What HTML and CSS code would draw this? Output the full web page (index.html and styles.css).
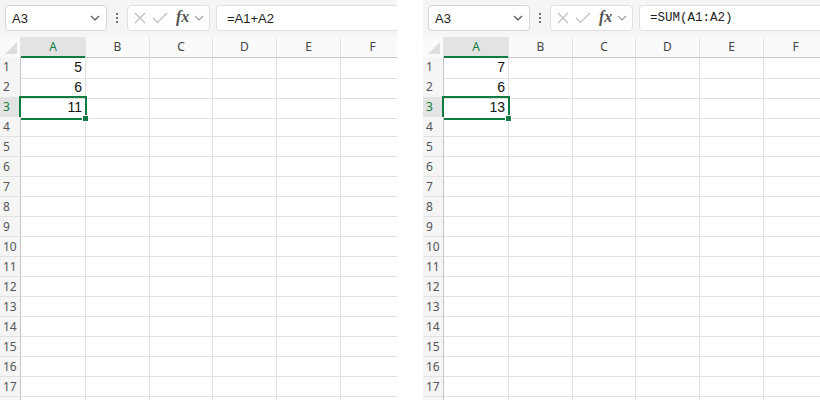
FILE: index.html
```html
<!DOCTYPE html>
<html>
<head>
<meta charset="utf-8">
<link rel="stylesheet" href="styles.css">
</head>
<body>
<div class="panel">
  <div class="toolbar">
    <div class="namebox"><span>A3</span><svg class="chev" width="10" height="6" viewBox="0 0 10 6"><path d="M1 1 L5 5 L9 1" fill="none" stroke="#555" stroke-width="1.2"/></svg></div>
    <div class="vdots"><i></i><i></i><i></i></div>
    <div class="fxbox">
      <svg width="14" height="14" viewBox="0 0 14 14"><path d="M2 2 L12 12 M12 2 L2 12" stroke="#bdbdbd" stroke-width="1.2"/></svg>
      <svg width="16" height="14" viewBox="0 0 16 14"><path d="M1 7 L5.5 11.5 L15 2" fill="none" stroke="#bdbdbd" stroke-width="1.2"/></svg>
      <span class="fx">fx</span>
      <svg width="10" height="6" viewBox="0 0 10 6"><path d="M1 1 L5 5 L9 1" fill="none" stroke="#999" stroke-width="1.1"/></svg>
    </div>
    <div class="formula">=A1+A2</div>
  </div>
  <div class="grid">
    <div class="row head"><span class="corner"><em></em></span><span class="sel">A</span><span>B</span><span>C</span><span>D</span><span>E</span><span>F</span></div>
    <div class="row"><span class="rh">1</span><span class="num">5</span><span></span><span></span><span></span><span></span><span></span></div>
    <div class="row"><span class="rh">2</span><span class="num">6</span><span></span><span></span><span></span><span></span><span></span></div>
    <div class="row"><span class="rh sel">3</span><span class="num active">11</span><span></span><span></span><span></span><span></span><span></span></div>
    <div class="row"><span class="rh">4</span><span></span><span></span><span></span><span></span><span></span><span></span></div>
    <div class="row"><span class="rh">5</span><span></span><span></span><span></span><span></span><span></span><span></span></div>
    <div class="row"><span class="rh">6</span><span></span><span></span><span></span><span></span><span></span><span></span></div>
    <div class="row"><span class="rh">7</span><span></span><span></span><span></span><span></span><span></span><span></span></div>
    <div class="row"><span class="rh">8</span><span></span><span></span><span></span><span></span><span></span><span></span></div>
    <div class="row"><span class="rh">9</span><span></span><span></span><span></span><span></span><span></span><span></span></div>
    <div class="row"><span class="rh">10</span><span></span><span></span><span></span><span></span><span></span><span></span></div>
    <div class="row"><span class="rh">11</span><span></span><span></span><span></span><span></span><span></span><span></span></div>
    <div class="row"><span class="rh">12</span><span></span><span></span><span></span><span></span><span></span><span></span></div>
    <div class="row"><span class="rh">13</span><span></span><span></span><span></span><span></span><span></span><span></span></div>
    <div class="row"><span class="rh">14</span><span></span><span></span><span></span><span></span><span></span><span></span></div>
    <div class="row"><span class="rh">15</span><span></span><span></span><span></span><span></span><span></span><span></span></div>
    <div class="row"><span class="rh">16</span><span></span><span></span><span></span><span></span><span></span><span></span></div>
    <div class="row"><span class="rh">17</span><span></span><span></span><span></span><span></span><span></span><span></span></div>
    <div class="row"><span class="rh"></span><span></span><span></span><span></span><span></span><span></span><span></span></div>
  </div>
</div>
<div class="panel">
  <div class="toolbar">
    <div class="namebox"><span>A3</span><svg class="chev" width="10" height="6" viewBox="0 0 10 6"><path d="M1 1 L5 5 L9 1" fill="none" stroke="#555" stroke-width="1.2"/></svg></div>
    <div class="vdots"><i></i><i></i><i></i></div>
    <div class="fxbox">
      <svg width="14" height="14" viewBox="0 0 14 14"><path d="M2 2 L12 12 M12 2 L2 12" stroke="#bdbdbd" stroke-width="1.2"/></svg>
      <svg width="16" height="14" viewBox="0 0 16 14"><path d="M1 7 L5.5 11.5 L15 2" fill="none" stroke="#bdbdbd" stroke-width="1.2"/></svg>
      <span class="fx">fx</span>
      <svg width="10" height="6" viewBox="0 0 10 6"><path d="M1 1 L5 5 L9 1" fill="none" stroke="#999" stroke-width="1.1"/></svg>
    </div>
    <div class="formula mono">=SUM(A1:A2)</div>
  </div>
  <div class="grid">
    <div class="row head"><span class="corner"><em></em></span><span class="sel">A</span><span>B</span><span>C</span><span>D</span><span>E</span><span>F</span></div>
    <div class="row"><span class="rh">1</span><span class="num">7</span><span></span><span></span><span></span><span></span><span></span></div>
    <div class="row"><span class="rh">2</span><span class="num">6</span><span></span><span></span><span></span><span></span><span></span></div>
    <div class="row"><span class="rh sel">3</span><span class="num active">13</span><span></span><span></span><span></span><span></span><span></span></div>
    <div class="row"><span class="rh">4</span><span></span><span></span><span></span><span></span><span></span><span></span></div>
    <div class="row"><span class="rh">5</span><span></span><span></span><span></span><span></span><span></span><span></span></div>
    <div class="row"><span class="rh">6</span><span></span><span></span><span></span><span></span><span></span><span></span></div>
    <div class="row"><span class="rh">7</span><span></span><span></span><span></span><span></span><span></span><span></span></div>
    <div class="row"><span class="rh">8</span><span></span><span></span><span></span><span></span><span></span><span></span></div>
    <div class="row"><span class="rh">9</span><span></span><span></span><span></span><span></span><span></span><span></span></div>
    <div class="row"><span class="rh">10</span><span></span><span></span><span></span><span></span><span></span><span></span></div>
    <div class="row"><span class="rh">11</span><span></span><span></span><span></span><span></span><span></span><span></span></div>
    <div class="row"><span class="rh">12</span><span></span><span></span><span></span><span></span><span></span><span></span></div>
    <div class="row"><span class="rh">13</span><span></span><span></span><span></span><span></span><span></span><span></span></div>
    <div class="row"><span class="rh">14</span><span></span><span></span><span></span><span></span><span></span><span></span></div>
    <div class="row"><span class="rh">15</span><span></span><span></span><span></span><span></span><span></span><span></span></div>
    <div class="row"><span class="rh">16</span><span></span><span></span><span></span><span></span><span></span><span></span></div>
    <div class="row"><span class="rh">17</span><span></span><span></span><span></span><span></span><span></span><span></span></div>
    <div class="row"><span class="rh"></span><span></span><span></span><span></span><span></span><span></span><span></span></div>
  </div>
</div>
</body>
</html>
```
FILE: styles.css
```css
html, body { margin: 0; padding: 0; background: #fff; }
body {
  display: flex;
  gap: 26px;
  width: 820px;
  height: 400px;
  overflow: hidden;
  font-family: "Liberation Sans", Arial, sans-serif;
}
.panel {
  width: 397px;
  height: 400px;
  overflow: hidden;
  flex: none;
}
.toolbar {
  height: 37px;
  box-sizing: border-box;
  background: #f5f5f5;
  padding: 5px 0 6px 5px;
  display: flex;
  align-items: stretch;
}
.namebox {
  width: 102px;
  box-sizing: border-box;
  background: #fff;
  border: 1px solid #d6d6d6;
  border-radius: 4px;
  display: flex;
  align-items: center;
  justify-content: space-between;
  padding: 0 6px 0 6px;
  font-size: 13px;
  color: #222;
}
.vdots {
  width: 20px;
  display: flex;
  flex-direction: column;
  align-items: center;
  justify-content: center;
  gap: 2px;
}
.vdots i {
  width: 2px;
  height: 2px;
  border-radius: 1px;
  background: #444;
}
.fxbox {
  width: 83px;
  box-sizing: border-box;
  background: #fff;
  border: 1px solid #e0e0e0;
  border-radius: 4px;
  display: flex;
  align-items: center;
  padding: 0 3px 0 5px;
  gap: 5px;
}
.fx {
  font-family: "Liberation Serif", "Times New Roman", serif;
  font-style: italic;
  font-weight: bold;
  font-size: 16px;
  color: #555;
  margin-left: 3px;
  margin-top: -2px;
}
.formula {
  margin-left: 6px;
  flex: 1;
  background: #fff;
  border: 1px solid #e0e0e0;
  border-right: none;
  border-radius: 4px 0 0 4px;
  display: flex;
  align-items: center;
  padding-left: 10px;
  font-size: 13px;
  color: #222;
}
.formula.mono {
  font-family: "Liberation Mono", "Courier New", monospace;
  font-size: 12.5px;
}
.grid { display: flex; flex-direction: column; }
.row {
  display: grid;
  grid-template-columns: 21px 65px 64px 63px 64px 64px 64px;
  height: 20px;
}
.row > span {
  box-sizing: border-box;
  border-right: 1px solid #e1e1e1;
  border-bottom: 1px solid #e1e1e1;
  position: relative;
}
.head > span {
  background: #fafafa;
  border-bottom: 1px solid #c6c6c6;
  border-right: 1px solid #e4e4e4;
  font-family: "Noto Sans", "Open Sans", sans-serif;
  font-size: 12px;
  color: #444;
  text-align: center;
  line-height: 19px;
}
.head > span.sel {
  background: #e3e3e3;
  color: #107c41;
  border-bottom: 2px solid #107c41;
}
.corner em {
  position: absolute;
  right: 3px;
  bottom: 3px;
  width: 12px;
  height: 12px;
  background: #dddddd;
  clip-path: polygon(100% 0, 100% 100%, 0 100%);
}
.rh {
  background: #f5f5f5;
  border-right: 1px solid #c6c6c6 !important;
  font-family: "Noto Sans", "Open Sans", sans-serif;
  font-size: 12px;
  color: #555;
  padding-left: 3px;
  line-height: 19px;
}
.rh.sel {
  background: #e3e3e3;
  color: #107c41;
}
.num {
  text-align: right;
  padding-right: 3px;
  font-size: 14px;
  color: #111;
  line-height: 21px;
}
.active::after {
  content: "";
  position: absolute;
  left: -2px;
  top: -1px;
  right: -2px;
  bottom: -2px;
  border: 2px solid #107c41;
}
.active::before {
  content: "";
  position: absolute;
  right: -4px;
  bottom: -4px;
  width: 5px;
  height: 5px;
  background: #107c41;
  border: 1px solid #fff;
  z-index: 2;
}
```
